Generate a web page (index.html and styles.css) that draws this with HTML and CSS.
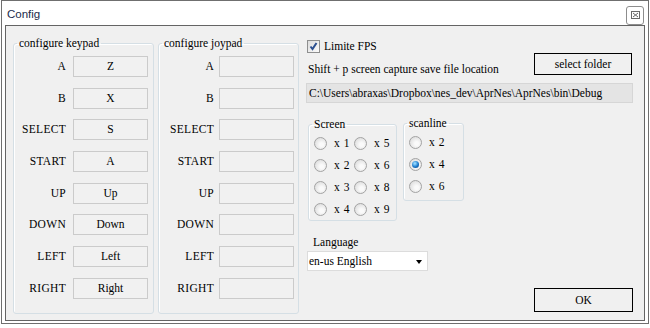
FILE: index.html
```html
<!DOCTYPE html>
<html lang="en">
<head>
    <meta charset="UTF-8">
    <title>Config</title>
    <link rel="stylesheet" href="styles.css">
</head>
<body>
    <div class="window">
        <div class="titlebar">
            <span class="title">Config</span>
            <span class="close-btn">
                <svg width="9" height="8" viewBox="0 0 9 8">
                    <rect x="0.5" y="0.5" width="8" height="7" fill="none" stroke="#6a6a6a"/>
                    <path d="M2 2 L7 6 M7 2 L2 6" stroke="#6a6a6a" stroke-width="1"/>
                </svg>
            </span>
        </div>
        <div class="client">
            <fieldset class="group keys">
                <legend>configure keypad</legend>
                <div class="key-grid">
                    <span class="key-label">A</span><span class="key-box">Z</span>
                    <span class="key-label">B</span><span class="key-box">X</span>
                    <span class="key-label">SELECT</span><span class="key-box">S</span>
                    <span class="key-label">START</span><span class="key-box">A</span>
                    <span class="key-label">UP</span><span class="key-box">Up</span>
                    <span class="key-label">DOWN</span><span class="key-box">Down</span>
                    <span class="key-label">LEFT</span><span class="key-box">Left</span>
                    <span class="key-label">RIGHT</span><span class="key-box">Right</span>
                </div>
            </fieldset>
            <fieldset class="group keys joypad">
                <legend>configure joypad</legend>
                <div class="key-grid">
                    <span class="key-label">A</span><span class="key-box"></span>
                    <span class="key-label">B</span><span class="key-box"></span>
                    <span class="key-label">SELECT</span><span class="key-box"></span>
                    <span class="key-label">START</span><span class="key-box"></span>
                    <span class="key-label">UP</span><span class="key-box"></span>
                    <span class="key-label">DOWN</span><span class="key-box"></span>
                    <span class="key-label">LEFT</span><span class="key-box"></span>
                    <span class="key-label">RIGHT</span><span class="key-box"></span>
                </div>
            </fieldset>
            <div class="options">
                <div class="check-row">
                    <span class="checkbox">
                        <svg width="11" height="11" viewBox="0 0 11 11">
                            <path d="M2.5 5.5 L4.5 8 L8.5 2" fill="none" stroke="#2b4f8f" stroke-width="2"/>
                        </svg>
                    </span>
                    <span>Limite FPS</span>
                </div>
                <div class="capture-row">
                    <span class="capture-text">Shift + p screen capture save file location</span>
                    <span class="btn folder-btn">select folder</span>
                </div>
                <div class="path-box">C:\Users\abraxas\Dropbox\nes_dev\AprNes\AprNes\bin\Debug</div>
                <div class="radio-groups">
                    <fieldset class="group screen-group">
                        <legend>Screen</legend>
                        <div class="radio-grid">
                            <span class="radio-item"><span class="radio"></span>x 1</span>
                            <span class="radio-item"><span class="radio"></span>x 5</span>
                            <span class="radio-item"><span class="radio"></span>x 2</span>
                            <span class="radio-item"><span class="radio"></span>x 6</span>
                            <span class="radio-item"><span class="radio"></span>x 3</span>
                            <span class="radio-item"><span class="radio"></span>x 8</span>
                            <span class="radio-item"><span class="radio"></span>x 4</span>
                            <span class="radio-item"><span class="radio"></span>x 9</span>
                        </div>
                    </fieldset>
                    <fieldset class="group scan-group">
                        <legend>scanline</legend>
                        <div class="radio-grid single">
                            <span class="radio-item"><span class="radio"></span>x 2</span>
                            <span class="radio-item"><span class="radio checked"></span>x 4</span>
                            <span class="radio-item"><span class="radio"></span>x 6</span>
                        </div>
                    </fieldset>
                </div>
                <div class="lang-label">Language</div>
                <div class="select-box">
                    <span>en-us English</span>
                    <span class="arrow"></span>
                </div>
                <div class="ok-row">
                    <span class="btn ok-btn">OK</span>
                </div>
            </div>
        </div>
    </div>
</body>
</html>
```

FILE: styles.css
```css
body {
    margin: 0;
    background-color: #ffffff;
    font-family: "Liberation Serif", serif;
    font-size: 11.5px;
    color: #000;
}

.window {
    margin-left: 1px;
    width: 646px;
    height: 322px;
    border: 1px solid #6f6f6f;
    background-color: #ffffff;
}

.titlebar {
    height: 24px;
    display: flex;
    align-items: center;
    justify-content: space-between;
    padding: 0 4px 0 5px;
}

.title {
    font-family: "Liberation Sans", sans-serif;
    font-size: 11.5px;
    color: #1b2b4b;
    margin-top: 2px;
}

.close-btn {
    width: 16px;
    height: 17px;
    border: 1px solid #8d8d8d;
    border-radius: 3px;
    display: flex;
    align-items: center;
    justify-content: center;
    margin-top: 4px;
}

.client {
    margin: 0 3px;
    height: 296px;
    box-sizing: border-box;
    border: 1px solid #646464;
    background-color: #f0f0f0;
    display: flex;
    align-items: flex-start;
    padding: 10px 0 0 7px;
}

.group {
    margin: 0;
    padding: 0;
    border: 1px solid #d5dfe5;
    border-radius: 3px;
    box-shadow: inset 1px 1px 0 #fff;
    min-width: 0;
}

.group legend {
    padding: 0 2px;
    margin-left: 3px;
    line-height: 14px;
}

.keys {
    width: 141px;
    height: 278px;
    box-sizing: border-box;
}

.joypad {
    margin-left: 4px;
}

.key-grid {
    display: grid;
    grid-template-columns: 1fr 75px;
    column-gap: 7px;
    row-gap: 10.7px;
    padding: 6px 5px 0 0;
}

.joypad .key-grid {
    column-gap: 5px;
    padding-right: 4px;
}

.key-label {
    text-align: right;
    line-height: 21px;
    letter-spacing: 0.3px;
}

.key-box {
    height: 21px;
    box-sizing: border-box;
    border: 1px solid #cbcbcb;
    background-color: #f1f1f1;
    text-align: center;
    line-height: 19px;
}

.options {
    margin-left: 7px;
    margin-top: 3px;
    width: 327px;
}

.check-row {
    display: flex;
    align-items: center;
    gap: 4px;
    height: 14px;
    margin-left: 1px;
}

.checkbox {
    width: 11px;
    height: 11px;
    border: 1px solid #8e8f8f;
    background: linear-gradient(135deg, #dcdcdc, #fbfbfb);
    display: flex;
}

.capture-row {
    display: flex;
    justify-content: space-between;
    align-items: flex-start;
}

.capture-text {
    margin-top: 10px;
    margin-left: 2px;
}

.btn {
    display: flex;
    align-items: center;
    justify-content: center;
    border: 1px solid #000;
    background-color: #f0f0f0;
    box-sizing: border-box;
}

.folder-btn {
    width: 98px;
    height: 22px;
    margin-right: 1px;
}

.path-box {
    margin-top: 8px;
    height: 20px;
    width: 327px;
    box-sizing: border-box;
    border: 1px solid #d6d6d6;
    background-color: #e4e4e4;
    line-height: 18px;
    padding-left: 2px;
}

.radio-groups {
    display: flex;
    align-items: flex-start;
    gap: 6px;
    margin-top: 14px;
    margin-left: 2px;
}

.screen-group {
    width: 89px;
    box-sizing: border-box;
    padding-bottom: 2px;
}

.scan-group {
    width: 61px;
    box-sizing: border-box;
    padding-bottom: 5px;
    margin-top: -1px;
}

.radio-grid {
    display: grid;
    grid-template-columns: 40px 40px;
    row-gap: 4px;
    padding: 3px 0 0 5px;
}

.radio-grid.single {
    grid-template-columns: 50px;
}

.radio-item {
    display: flex;
    align-items: center;
    height: 18px;
    gap: 7px;
    letter-spacing: 0.5px;
}

.radio {
    width: 11px;
    height: 11px;
    border: 1px solid #a3a3a3;
    border-radius: 50%;
    background: radial-gradient(circle at 60% 60%, #fafafa 20%, #d8d8d8 90%);
    position: relative;
}

.radio.checked::after {
    content: "";
    position: absolute;
    left: 2px;
    top: 2px;
    width: 7px;
    height: 7px;
    border-radius: 50%;
    background: radial-gradient(circle at 40% 35%, #8fd6ff 10%, #1a78c9 55%, #0b3b7a 100%);
}

.lang-label {
    margin-top: 14px;
    margin-left: 7px;
    line-height: 14px;
}

.select-box {
    margin-top: 2px;
    margin-left: 1px;
    width: 121px;
    height: 20px;
    box-sizing: border-box;
    border: 1px solid #dcdcdc;
    background-color: #ffffff;
    display: flex;
    align-items: center;
    justify-content: space-between;
    padding: 0 5px 0 1px;
}

.arrow {
    width: 0;
    height: 0;
    border-left: 3.5px solid transparent;
    border-right: 3.5px solid transparent;
    border-top: 4px solid #000;
    margin-top: 2px;
}

.ok-row {
    display: flex;
    justify-content: flex-end;
    margin-top: 17px;
}

.ok-btn {
    width: 99px;
    height: 24px;
}
```
